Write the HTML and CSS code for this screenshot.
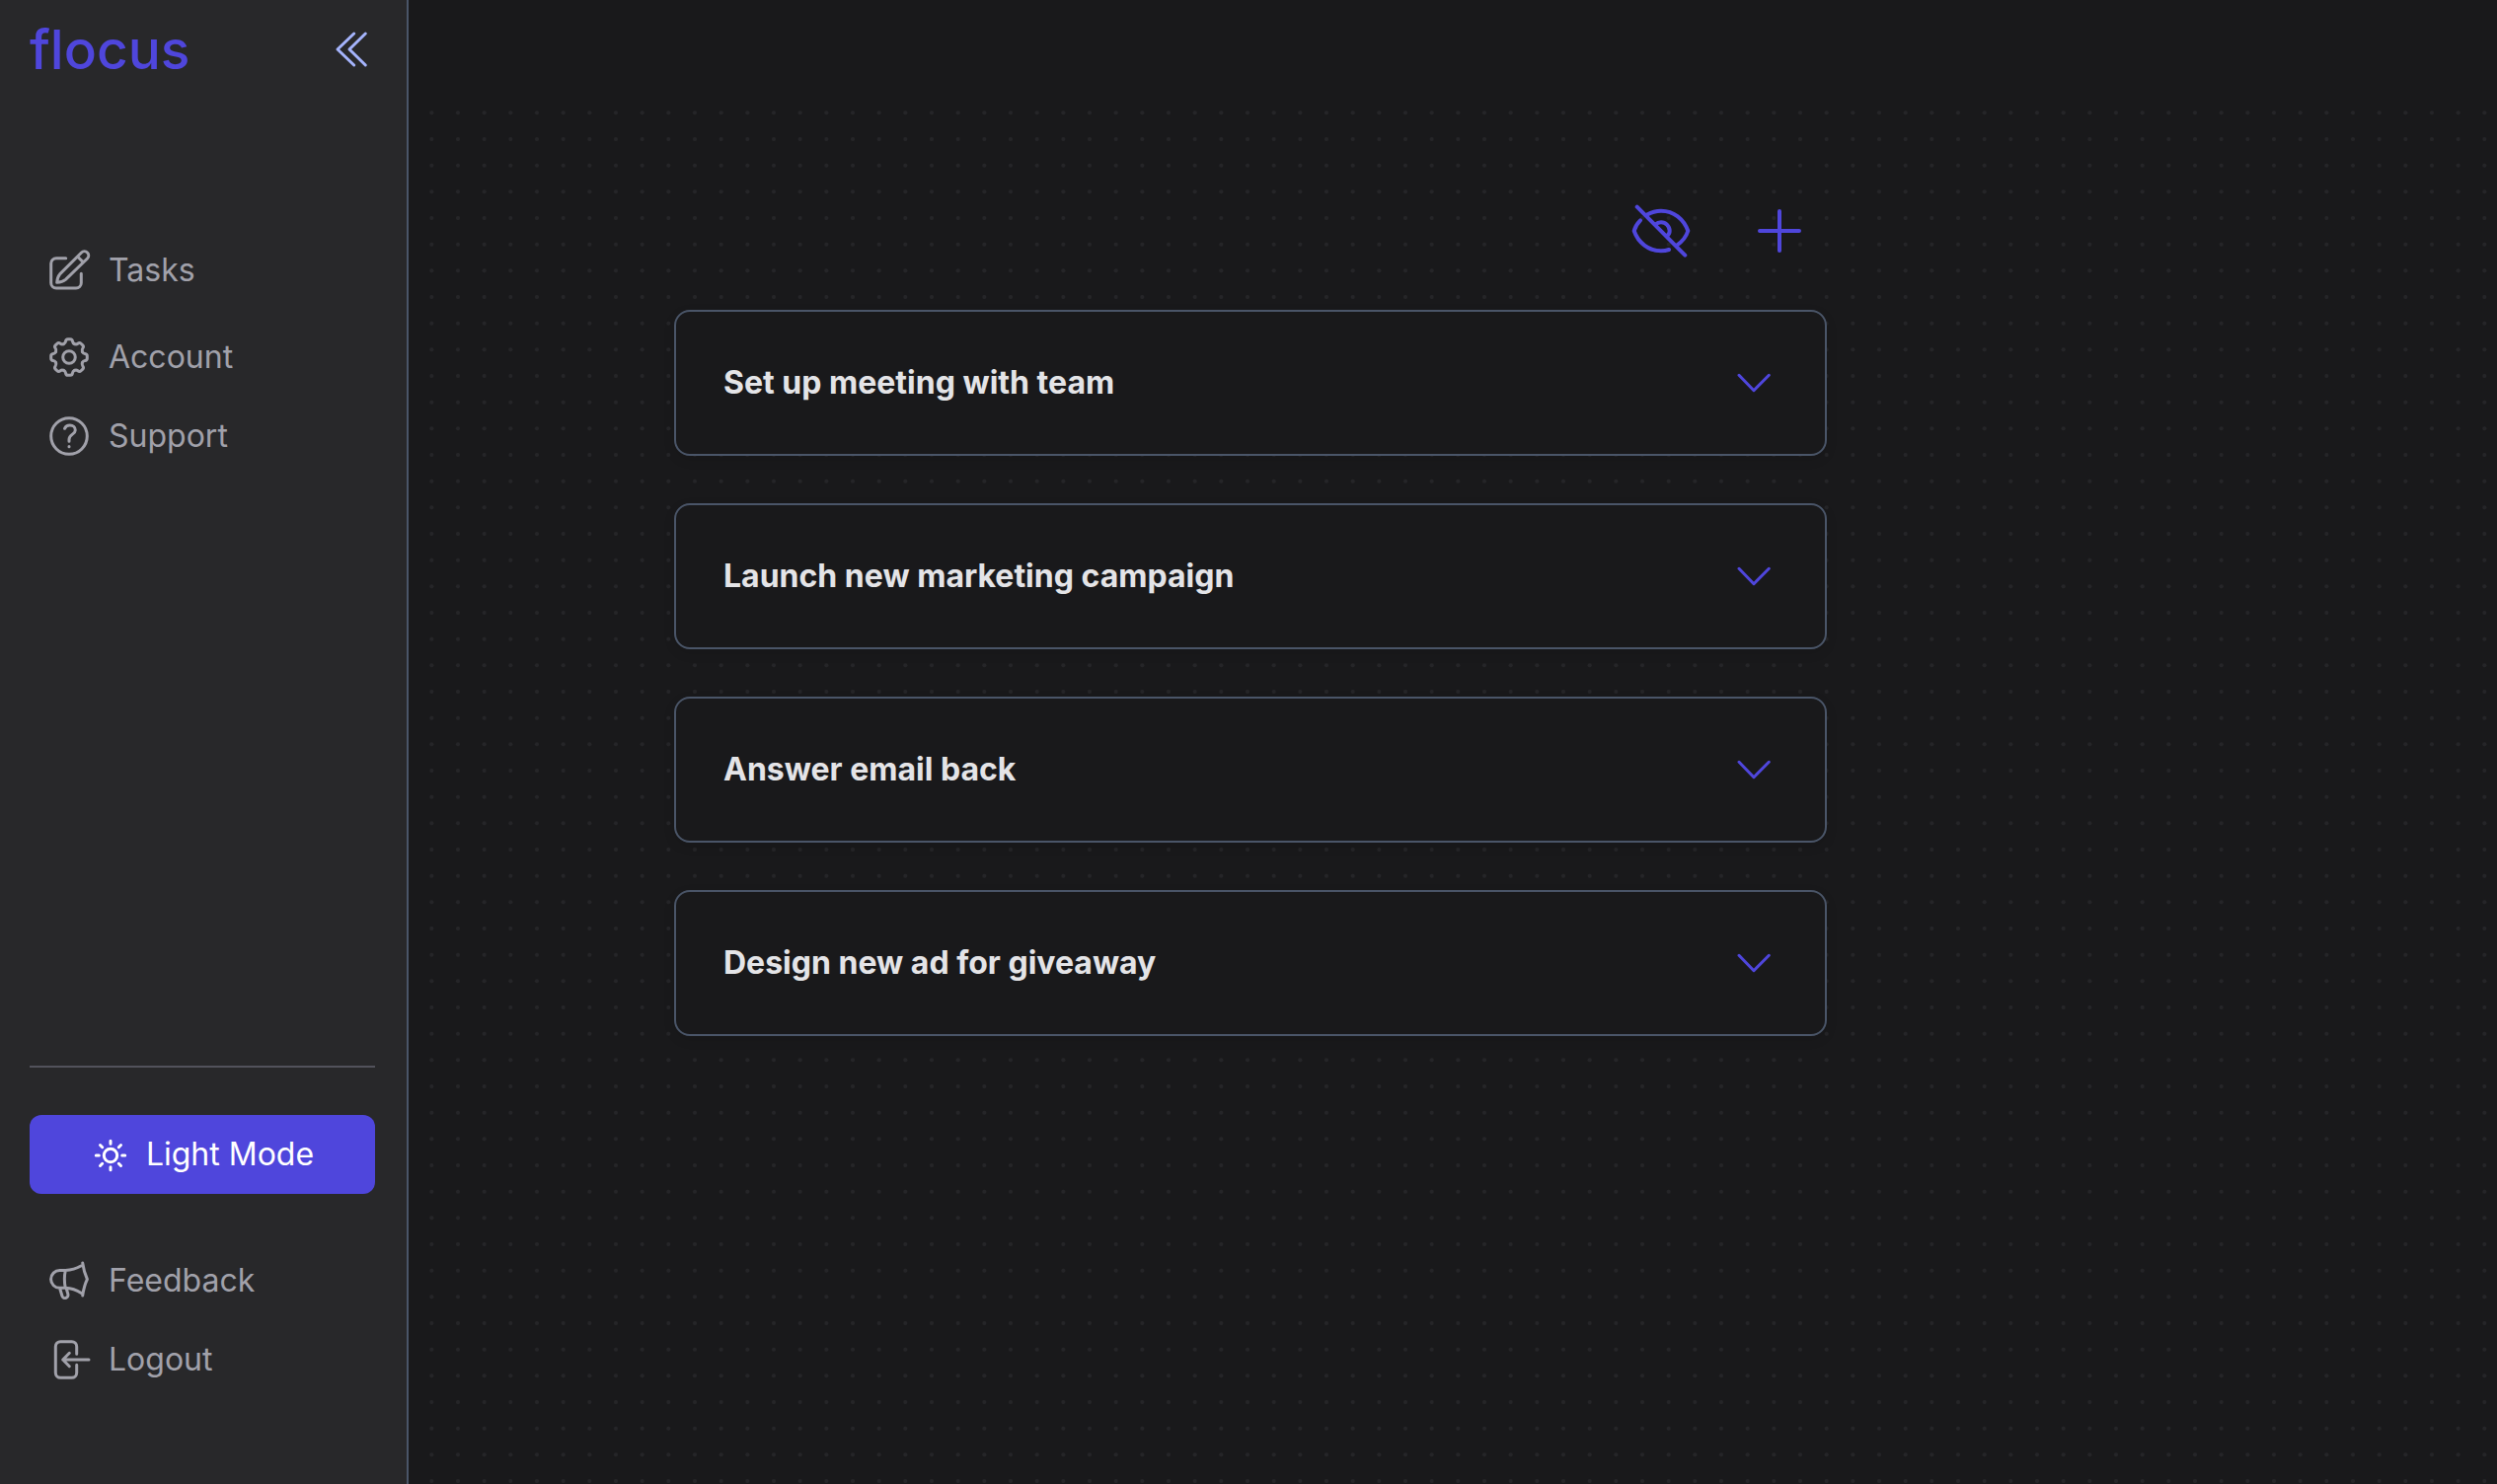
FILE: index.html
```html
<!DOCTYPE html>
<html lang="en">
<head>
<meta charset="utf-8">
<meta name="viewport" content="width=device-width, initial-scale=1">
<title>flocus</title>
<link rel="stylesheet" href="styles.css">
</head>
<body>
<svg class="sprite" aria-hidden="true">
  <symbol id="chevron-down" viewBox="0 0 48 48"><path d="M9 16.3 24 31.7 39.3 16.3"/></symbol>
</svg>
<div class="app">
  <aside class="sidebar">
    <header class="brand">
      <a class="logo" href="#">flocus</a>
      <button class="icon-button collapse" type="button" aria-label="Collapse sidebar">
        <svg class="icon" viewBox="0 0 48 48"><path d="M26.7 8 10 24l16.7 16M38.3 8 22 24l16.3 16"/></svg>
      </button>
    </header>
    <nav class="nav nav-main">
      <a class="nav-item first" href="#">
        <svg class="icon" viewBox="0 0 48 48"><path d="M20.7 11.7H11a5.3 5.3 0 0 0-5.3 5.3v19.7A5.3 5.3 0 0 0 11 42h20a5.3 5.3 0 0 0 5.3-5.3v-9.4M11.7 36.3c.2-3.3 1-6.3 2.9-8.4L36.5 6a4.2 4.2 0 0 1 6 6L20.4 33.4c-2.3 1.900-5.400 2.700-8.700 2.900ZM33.300 10.700l4.900 4.900"/></svg>
        Tasks
      </a>
      <a class="nav-item" href="#">
        <svg class="icon" viewBox="-24 -24 48 48">
          <defs><path id="tooth" d="M-5.5-13.4C-4.4-13.9-3.7-14.6-3.5-16-3.3-17.6-2.4-18.3-1.2-18.3H1.2C2.4-18.3 3.3-17.6 3.5-16 3.7-14.6 4.4-13.9 5.5-13.4"/></defs>
          <circle r="6.3"/>
          <use href="#tooth"/><use href="#tooth" transform="rotate(45)"/><use href="#tooth" transform="rotate(90)"/><use href="#tooth" transform="rotate(135)"/>
          <use href="#tooth" transform="rotate(180)"/><use href="#tooth" transform="rotate(225)"/><use href="#tooth" transform="rotate(270)"/><use href="#tooth" transform="rotate(315)"/>
        </svg>
        Account
      </a>
      <a class="nav-item" href="#">
        <svg class="icon" viewBox="0 0 48 48"><circle cx="24" cy="24" r="18.3"/><path d="M19.5 16.3c1-2.200 2.900-3.300 5.300-3.300 3.200 0 5.500 2 5.500 4.900 0 4.300-6.300 4.200-6.300 9.300v2M24 34.500v.2"/></svg>
        Support
      </a>
    </nav>
    <div class="sidebar-bottom">
      <hr class="divider">
      <button class="mode-button" type="button">
        <svg class="icon sun" viewBox="0 0 40 40"><circle cx="20" cy="21" r="6.700"/><path d="M20 6.300v3M20 32.700v3M5.300 21h3M31.700 21h3M9.500 10.500l2.200 2.200M28.300 29.300l2.200 2.200M9.500 31.500l2.200-2.200M28.300 12.700l2.200-2.200"/></svg>
        Light Mode
      </button>
      <nav class="nav">
        <a class="nav-item" href="#">
          <svg class="icon" viewBox="0 0 48 48"><path d="M20.3 13.5h-5.800a8.900 8.900 0 0 0 0 17.800h5.800c5.900.3 11.300 2.100 16 5.200M20.300 13.500c5.600-.3 10.900-1.700 15.700-4.500M20.300 13.500c-1.300 5.900-1.300 11.900 0 17.800M14.700 32l2.200 7.300a3.100 3.100 0 0 0 6-1.600L21.300 32M37.700 6c.8 5.500 2 10.800 4.700 16.500-2.700 5.500-3.900 11-4.700 16.500"/></svg>
          Feedback
        </a>
        <a class="nav-item" href="#">
          <svg class="icon" viewBox="0 0 48 48"><path d="M31.7 18.3V10.700a5 5 0 0 0-5-5H15.300a5 5 0 0 0-5 5v26.600a5 5 0 0 0 5 5h11.400a5 5 0 0 0 5-5v-8M44 24H17.700M24.300 17.300 17.700 24l6.600 6.700"/></svg>
          Logout
        </a>
      </nav>
    </div>
  </aside>
  <main class="board">
    <div class="column">
      <div class="toolbar">
        <button class="icon-button" type="button" aria-label="Hide completed tasks">
          <svg class="icon large" viewBox="0 0 64 64"><path d="M7.700 7.700 56.300 56.700M11 21.300C8 24.300 5.700 28 4.700 32 9 44.500 20 52.300 32 52.300c2.700 0 5.500-.4 8-1.300M18 15.500c4.500-2.600 9-3.800 14-3.800 13 0 23 8.500 27.300 20.300-1.800 5.700-5.800 10.800-11 14.300M26.300 25.500c1.600-1.500 3.500-2.200 5.700-2.200a8.700 8.700 0 0 1 8.700 8.700c0 2-1.200 4-2.700 5.300"/></svg>
        </button>
        <button class="icon-button" type="button" aria-label="Add task">
          <svg class="icon large" viewBox="0 0 64 64"><path d="M32 12v40M12 32h40"/></svg>
        </button>
      </div>
      <button class="task" type="button" aria-expanded="false">Set up meeting with team <svg class="icon"><use href="#chevron-down"/></svg></button>
      <button class="task" type="button" aria-expanded="false">Launch new marketing campaign <svg class="icon"><use href="#chevron-down"/></svg></button>
      <button class="task" type="button" aria-expanded="false">Answer email back <svg class="icon"><use href="#chevron-down"/></svg></button>
      <button class="task" type="button" aria-expanded="false">Design new ad for giveaway <svg class="icon"><use href="#chevron-down"/></svg></button>
    </div>
  </main>
</div>
</body>
</html>
```
FILE: styles.css
```css
* {
  box-sizing: border-box;
}

body {
  margin: 0;
  background: #19191b;
  color: #a1a1aa;
  font: 400 32px/48px Inter, "Liberation Sans", sans-serif;
}

button {
  border: 0;
  padding: 0;
  background: none;
  color: inherit;
  font: inherit;
  cursor: pointer;
}

a {
  color: inherit;
  text-decoration: none;
}

.sprite {
  display: none;
}

.app {
  display: flex;
  min-height: 100vh;
}

.icon {
  flex: none;
  width: 48px;
  height: 48px;
  fill: none;
  stroke: currentColor;
  stroke-width: 3;
  stroke-linecap: round;
  stroke-linejoin: round;
}

.icon.large {
  width: 64px;
  height: 64px;
  stroke-width: 4;
}

.icon-button {
  display: flex;
}

/* Sidebar */

.sidebar {
  display: flex;
  flex: none;
  flex-direction: column;
  width: 414px;
  padding: 0 32px 86px 30px;
  border-right: 2px solid #4a5568;
  background: #28282a;
}

.brand {
  display: flex;
  align-items: center;
  justify-content: space-between;
  height: 100px;
}

.logo {
  color: #4f46dc;
  font-size: 55px;
  font-weight: 500;
}

.collapse {
  color: #a5b4fc;
}

.nav-main {
  margin-top: 134px;
}

.nav-item {
  display: flex;
  align-items: center;
  gap: 16px;
  height: 80px;
  padding: 0 16px;
}

.nav-item.first {
  margin-bottom: 8px;
}

.sidebar-bottom {
  margin-top: auto;
}

.divider {
  margin: 0 0 48px;
  border: 0;
  border-top: 2px solid #52525b;
}

.mode-button {
  display: flex;
  align-items: center;
  justify-content: center;
  gap: 16px;
  width: 100%;
  height: 80px;
  margin-bottom: 48px;
  border-radius: 12px;
  background: #4f46dc;
  color: #fff;
}

.sun {
  width: 40px;
  height: 40px;
}

/* Task board */

.board {
  flex: 1;
  margin-top: 100px;
  padding: 86px 48px 48px 269px;
  background: url("data:image/svg+xml,%3Csvg xmlns='http://www.w3.org/2000/svg' width='80' height='80' viewBox='0 0 24 24' fill='%23252528'%3E%3Ccircle cx='4' cy='4' r='.6'/%3E%3Ccircle cx='12' cy='4' r='.6'/%3E%3Ccircle cx='20' cy='4' r='.6'/%3E%3Ccircle cx='4' cy='12' r='.6'/%3E%3Ccircle cx='12' cy='12' r='.6'/%3E%3Ccircle cx='20' cy='12' r='.6'/%3E%3Ccircle cx='4' cy='20' r='.6'/%3E%3Ccircle cx='12' cy='20' r='.6'/%3E%3Ccircle cx='20' cy='20' r='.6'/%3E%3C/svg%3E") 10px 1px;
}

.column {
  display: flex;
  flex-direction: column;
  gap: 48px;
  max-width: 1168px;
}

.toolbar {
  display: flex;
  align-items: center;
  justify-content: flex-end;
  gap: 56px;
  height: 80px;
  padding: 16px 16px 0;
  color: #4f46dc;
}

.task {
  display: flex;
  align-items: center;
  justify-content: space-between;
  height: 148px;
  padding: 0 48px;
  border: 2px solid #4a5568;
  border-radius: 16px;
  background: #19191b;
  box-shadow: 0 4px 12px rgba(0, 0, 0, .1);
  color: #e4e4e7;
  font-weight: 700;
}

.task .icon {
  color: #4f46dc;
}
```
